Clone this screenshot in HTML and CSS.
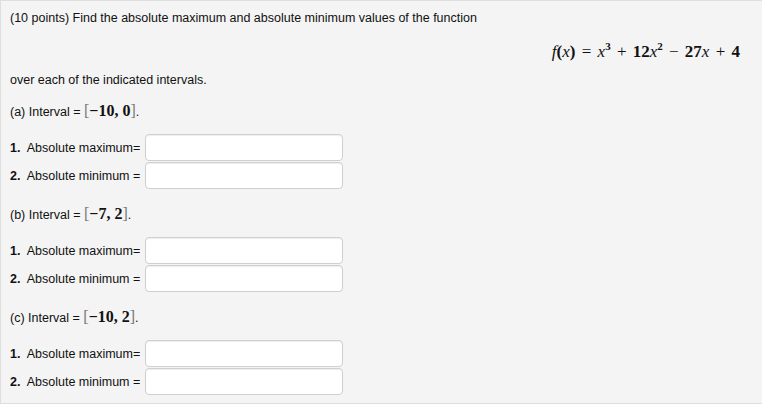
FILE: index.html
```html
<!DOCTYPE html>
<html>
<head>
<meta charset="utf-8">
<link rel="stylesheet" href="styles.css">
</head>
<body>
<div class="panel">
  <p class="intro">(10 points) Find the absolute maximum and absolute minimum values of the function</p>
  <div class="formula"><span class="mi">f</span>(<span class="mi">x</span>) <span class="op">=</span> <span class="mi">x</span><sup>3</sup> <span class="op">+</span> 12<span class="mi">x</span><sup>2</sup> <span class="op">−</span> 27<span class="mi">x</span> <span class="op">+</span> 4</div>
  <p class="over">over each of the indicated intervals.</p>

  <p class="part">(a) Interval = <span class="math"><span class="br">[</span>−10, 0<span class="br">]</span></span>.</p>
  <div class="rows">
    <div class="row"><span class="lbl"><b>1.</b>&nbsp; Absolute maximum=</span><span class="box"></span></div>
    <div class="row"><span class="lbl"><b>2.</b>&nbsp; Absolute minimum =</span><span class="box"></span></div>
  </div>

  <p class="part part-next">(b) Interval = <span class="math"><span class="br">[</span>−7, 2<span class="br">]</span></span>.</p>
  <div class="rows">
    <div class="row"><span class="lbl"><b>1.</b>&nbsp; Absolute maximum=</span><span class="box"></span></div>
    <div class="row"><span class="lbl"><b>2.</b>&nbsp; Absolute minimum =</span><span class="box"></span></div>
  </div>

  <p class="part part-next">(c) Interval = <span class="math"><span class="br">[</span>−10, 2<span class="br">]</span></span>.</p>
  <div class="rows">
    <div class="row"><span class="lbl"><b>1.</b>&nbsp; Absolute maximum=</span><span class="box"></span></div>
    <div class="row"><span class="lbl"><b>2.</b>&nbsp; Absolute minimum =</span><span class="box"></span></div>
  </div>
</div>
</body>
</html>
```
FILE: styles.css
```css
html, body {
  margin: 0;
  padding: 0;
  background: #ffffff;
}
body {
  font-family: "Liberation Sans", Arial, sans-serif;
  font-size: 12.5px;
  color: #111;
}
.panel {
  box-sizing: border-box;
  height: 404px;
  border: 1px solid #dedede;
  border-right: none;
  background: #f4f4f4;
  padding: 9px 9px 0 9px;
}
p {
  margin: 0;
  height: 16px;
  line-height: 16px;
}
.formula {
  margin-top: 16px;
  height: 20px;
  line-height: 20px;
  text-align: right;
  padding-right: 13px;
  font-family: "Liberation Serif", "Times New Roman", serif;
  font-size: 17px;
  font-weight: bold;
  color: #111;
}
.formula .mi {
  font-style: italic;
  font-weight: normal;
}
.formula .op {
  font-weight: normal;
  padding: 0 2px;
}
.formula sup {
  font-size: 11px;
  line-height: 0;
  vertical-align: 7px;
}
.over {
  margin-top: 10px;
}
.part {
  margin-top: 16px;
}
.part-next {
  margin-top: 18px;
}
.math {
  font-family: "Liberation Serif", "Times New Roman", serif;
  font-size: 16px;
  line-height: 10px;
  font-weight: bold;
  color: #111;
}
.math .br {
  font-weight: normal;
  color: #777;
}
.rows {
  margin-top: 14px;
  display: flex;
  flex-direction: column;
  gap: 1px;
}
.row {
  display: flex;
  align-items: center;
  height: 27px;
}
.lbl {
  width: 135px;
  flex: none;
  white-space: nowrap;
}
.box {
  box-sizing: border-box;
  width: 198px;
  height: 27px;
  background: #fff;
  border: 1px solid #cfcfcf;
  border-radius: 4px;
  box-shadow: inset 0 1px 1px rgba(0, 0, 0, 0.07);
}
```
